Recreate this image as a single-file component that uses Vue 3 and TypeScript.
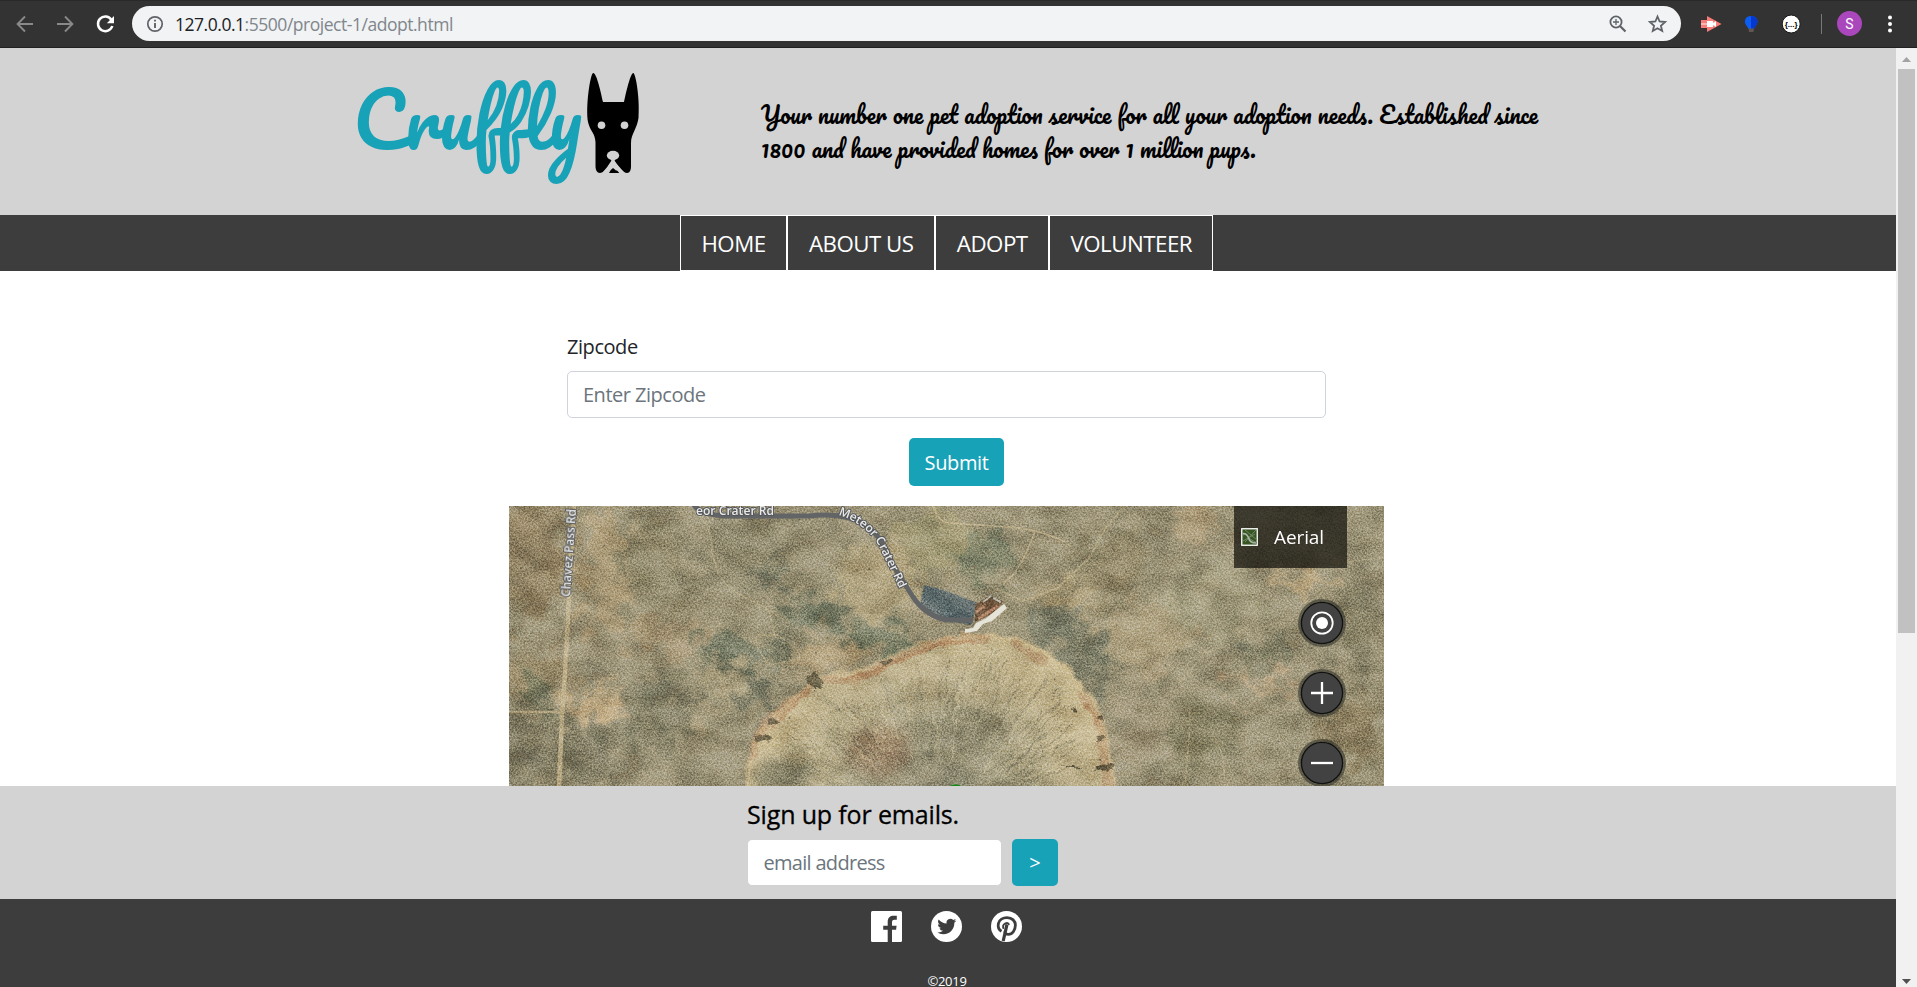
<script setup lang="ts">
interface NavItem {
  label: string
  width: number
}

const navItems: NavItem[] = [
  { label: 'HOME', width: 107.5 },
  { label: 'ABOUT US', width: 148 },
  { label: 'ADOPT', width: 114 },
  { label: 'VOLUNTEER', width: 164 },
]

const rim: [number, number][] = [
  [236, 284], [240, 255], [250, 225], [268, 205], [300, 180], [315, 168], [345, 168],
  [375, 155], [410, 138], [440, 131], [470, 129], [505, 131], [530, 141], [550, 155],
  [565, 168], [576, 186], [592, 206], [598, 235], [606, 284],
]

const smooth = (points: [number, number][]): string => {
  let d = `M${points[0][0]} ${points[0][1]}`
  for (let i = 1; i < points.length - 1; i++) {
    const mx = (points[i][0] + points[i + 1][0]) / 2
    const my = (points[i][1] + points[i + 1][1]) / 2
    d += ` Q${points[i][0]} ${points[i][1]} ${mx} ${my}`
  }
  const last = points[points.length - 1]
  return `${d} L${last[0]} ${last[1]}`
}

const rimPath = smooth(rim)

// Seeded generator keeps the terrain identical on every load.
let seed = 19
const rnd = (): number => {
  seed = (seed * 16807) % 2147483647
  return seed / 2147483647
}

const rimPoint = (t: number): [number, number] => {
  const f = t * (rim.length - 1)
  const i = Math.min(Math.floor(f), rim.length - 2)
  const k = f - i
  return [rim[i][0] + (rim[i + 1][0] - rim[i][0]) * k, rim[i][1] + (rim[i + 1][1] - rim[i][1]) * k]
}

interface Ridge {
  d: string
  light: boolean
  width: number
}

const ridges: Ridge[] = Array.from({ length: 340 }, (_, n) => {
  const [x, y] = rimPoint(0.01 + rnd() * 0.98)
  const a = 0.06 + rnd() * 0.4
  const b = a + 0.06 + rnd() * 0.18
  const cx = 425
  const cy = 330
  const px = x + (cx - x) * a
  const py = y + (cy - y) * a
  const qx = x + (cx - x) * b
  const qy = y + (cy - y) * b
  const j = (rnd() - 0.5) * 9
  return {
    d: `M${px.toFixed(1)} ${py.toFixed(1)} Q${((px + qx) / 2 + j).toFixed(1)} ${((py + qy) / 2 + j).toFixed(1)} ${qx.toFixed(1)} ${qy.toFixed(1)}`,
    light: n % 2 === 0,
    width: 0.5 + rnd() * 1.1,
  }
})

interface Patch {
  x: number
  y: number
  rx: number
  ry: number
  c: string
  o: number
}

const patches: Patch[] = [
  { x: 95, y: 60, rx: 22, ry: 70, c: '#b29d77', o: 0.65 },
  { x: 20, y: 45, rx: 40, ry: 60, c: '#8d7c58', o: 0.6 },
  { x: 20, y: 170, rx: 45, ry: 25, c: '#95835f', o: 0.6 },
  { x: 25, y: 245, rx: 45, ry: 40, c: '#77725a', o: 0.7 },
  { x: 30, y: 185, rx: 14, ry: 20, c: '#5f6751', o: 0.6 },
  { x: 85, y: 200, rx: 28, ry: 15, c: '#c0a982', o: 0.9 },
  { x: 80, y: 250, rx: 22, ry: 34, c: '#746f58', o: 0.7 },
  { x: 145, y: 60, rx: 28, ry: 50, c: '#857b5d', o: 0.5 },
  { x: 150, y: 205, rx: 40, ry: 40, c: '#7c7a63', o: 0.65 },
  { x: 155, y: 130, rx: 40, ry: 18, c: '#b09b78', o: 0.55 },
  { x: 240, y: 40, rx: 40, ry: 30, c: '#827d62', o: 0.6 },
  { x: 262, y: 70, rx: 20, ry: 14, c: '#6f7561', o: 0.5 },
  { x: 225, y: 145, rx: 34, ry: 17, c: '#656e5b', o: 0.65 },
  { x: 308, y: 105, rx: 30, ry: 16, c: '#616b58', o: 0.65 },
  { x: 275, y: 142, rx: 12, ry: 9, c: '#59634f', o: 0.7 },
  { x: 220, y: 175, rx: 28, ry: 8, c: '#b7aa87', o: 0.6 },
  { x: 200, y: 205, rx: 38, ry: 8, c: '#b3a480', o: 0.6 },
  { x: 250, y: 190, rx: 20, ry: 20, c: '#69705d', o: 0.55 },
  { x: 370, y: 75, rx: 40, ry: 40, c: '#b9aa82', o: 0.7 },
  { x: 425, y: 35, rx: 40, ry: 30, c: '#a19870', o: 0.7 },
  { x: 320, y: 150, rx: 45, ry: 14, c: '#baa47d', o: 0.75 },
  { x: 375, y: 133, rx: 42, ry: 14, c: '#6b735d', o: 0.7 },
  { x: 478, y: 52, rx: 30, ry: 24, c: '#7c8268', o: 0.6 },
  { x: 545, y: 120, rx: 30, ry: 18, c: '#717461', o: 0.7 },
  { x: 578, y: 155, rx: 24, ry: 28, c: '#6f7460', o: 0.7 },
  { x: 560, y: 90, rx: 30, ry: 16, c: '#b1a17a', o: 0.65 },
  { x: 640, y: 130, rx: 50, ry: 34, c: '#afa07d', o: 0.75 },
  { x: 700, y: 95, rx: 50, ry: 35, c: '#a6a080', o: 0.7 },
  { x: 600, y: 60, rx: 30, ry: 40, c: '#8f8362', o: 0.6 },
  { x: 690, y: 15, rx: 22, ry: 18, c: '#baa078', o: 0.5 },
  { x: 790, y: 74, rx: 34, ry: 9, c: '#bea77e', o: 0.8 },
  { x: 755, y: 150, rx: 30, ry: 20, c: '#79785e', o: 0.55 },
  { x: 690, y: 230, rx: 40, ry: 40, c: '#85805f', o: 0.5 },
  { x: 630, y: 215, rx: 35, ry: 45, c: '#a1967c', o: 0.6 },
  { x: 850, y: 120, rx: 25, ry: 40, c: '#7b7559', o: 0.65 },
  { x: 840, y: 225, rx: 30, ry: 35, c: '#897b59', o: 0.6 },
  { x: 745, y: 180, rx: 20, ry: 7, c: '#c2a783', o: 0.75 },
  { x: 777, y: 170, rx: 14, ry: 9, c: '#c2a783', o: 0.7 },
]

interface Speck {
  x: number
  y: number
  r: number
  dark: boolean
}

const specks: Speck[] = Array.from({ length: 750 }, (_, n) => ({
  x: rnd() * 875,
  y: rnd() * 280,
  r: 0.4 + rnd() * 0.8,
  dark: n % 4 !== 0,
}))
</script>

<template>
  <div class="window">
    <header class="toolbar">
      <svg class="nav-icons" width="132" height="48" viewBox="0 0 132 48" fill="none">
        <g stroke="#88898b" stroke-width="1.9">
          <path d="M33 24H18M25 16.5 17.6 24l7.4 7.500" />
          <path d="M57 24h15M65 16.500 72.400 24 65 31.500" />
        </g>
        <path d="M111.300 19.700A7.300 7.300 0 1 0 112.300 26" stroke="#fff" stroke-width="2.500" />
        <path d="M114 16v7.200h-7.200Z" fill="#fff" />
      </svg>
      <div class="address">
        <svg class="info" width="18" height="18" viewBox="0 0 18 18">
          <circle cx="9" cy="9" r="7.200" fill="none" stroke="#5f6368" stroke-width="1.700" />
          <path d="M9 8v5M9 4.700v1.900" stroke="#5f6368" stroke-width="1.900" />
        </svg>
        <span class="url"><b>127.0.0.1</b>:5500/project-1/adopt.html</span>
        <svg class="address-tools" width="62" height="22" viewBox="0 0 62 22" fill="none">
          <g stroke="#5f6368" stroke-width="1.800">
            <circle cx="8" cy="9" r="5.600" />
            <path d="m12 13 5.500 5.500" stroke-width="2.200" />
            <path d="M5 9h6M8 6v6" stroke-width="1.300" />
            <path d="m49.500 3.500 2.100 5 5.500.5-4.200 3.700 1.300 5.300-4.700-2.800-4.700 2.800 1.300-5.300-4.200-3.700 5.500-.5Z" />
          </g>
        </svg>
      </div>
      <svg class="extensions" width="236" height="48" viewBox="0 0 236 48">
        <path d="M20 20h6v-4l14.500 8-14.500 8v-4h-6Z" fill="#fa7c78" />
        <path d="M26 21h6v2l3-2v6l-3-2v2h-6Z" fill="#fff" />
        <path d="M20 23h6v2h-6Z" fill="#fbb6b2" />
        <path d="M70 16c8 0 7.200 8 4.500 10l-1.500 3h-5.500l-2-3.500c-3-3-2-9.500 4.500-9.500Z" fill="#0b5df4" />
        <path d="M70 16v13h3l1.500-3c3-2 3.500-10-4.500-10Z" fill="#0638cf" />
        <path d="M67.500 28.500h5.500L72.500 32H68Z" fill="#625650" />
        <circle cx="110.200" cy="24" r="9" fill="#fff" stroke="#171717" />
        <text x="110.200" y="27" text-anchor="middle" textLength="13" lengthAdjust="spacingAndGlyphs" class="braces">{...}</text>
        <path d="M140.500 14v20" stroke="#77787a" />
        <circle cx="168.500" cy="23.500" r="12.500" fill="#ab47bc" />
        <text x="168.500" y="28.500" text-anchor="middle" class="avatar">S</text>
        <g fill="#fff">
          <circle cx="209" cy="17.500" r="2" />
          <circle cx="209" cy="24" r="2" />
          <circle cx="209" cy="30.500" r="2" />
        </g>
      </svg>
    </header>

    <div class="viewport">
      <div class="page">
        <section class="banner">
          <svg class="logo" width="300" height="150" viewBox="350 50 300 150">
            <text class="wordmark" x="353" y="149.500">Cruffly</text>
            <path
              d="M593 73C590 75 585.500 107 588 122C590 131 595 133 595.500 142V166C595.500 170 597 173 600 173C605 173 610 164 613 161L620 173L613.600 173C616 170 618 169 621 173L613 161C619 165 623 173 627 173C630 173 631 170 631 166V143C631 134 637 129 638.500 118C640 99 636 75 633.500 73C631 72 627 88 624 102H603C600 88 596 72 593 73Z"
              fill="#000"
            />
            <g fill="#d3d3d3">
              <circle cx="601.500" cy="125.300" r="3.800" />
              <circle cx="624.500" cy="125.300" r="3.800" />
              <ellipse cx="613" cy="155.500" rx="6.200" ry="4.700" />
            </g>
            <path d="M613 158v3.500c-3 5-5 8-9 12M613 161.500c3 5 5 8 9 12" fill="none" stroke="#d3d3d3" stroke-width="3.500" />
            <path d="M609 173q1-3 4-5q3 2 5 5Z" fill="#000" />
          </svg>
          <p class="tagline">Your number one pet adoption service for all your adoption needs. Established since<br />1800 and have provided homes for over 1 million pups.</p>
        </section>

        <nav class="menu">
          <a v-for="item in navItems" :key="item.label" class="menu-link" :style="{ width: item.width + 'px' }">{{ item.label }}</a>
        </nav>

        <main class="content">
          <form class="search">
            <label class="zip-label" for="zip">Zipcode</label>
            <input id="zip" class="field zip-field" type="text" placeholder="Enter Zipcode" />
            <button class="button submit" type="button">Submit</button>
          </form>

          <div class="map">
            <svg class="terrain" width="875" height="280" viewBox="0 0 875 280">
              <defs>
                <filter id="grain" x="0" y="0" width="100%" height="100%" color-interpolation-filters="sRGB">
                  <feTurbulence type="fractalNoise" baseFrequency="0.6" numOctaves="3" seed="7" />
                  <feColorMatrix values="2 0 0 0 -.5  2 0 0 0 -.5  2 0 0 0 -.5  0 0 0 0 1" />
                </filter>
                <filter id="clouds" x="0" y="0" width="100%" height="100%" color-interpolation-filters="sRGB">
                  <feTurbulence type="fractalNoise" baseFrequency="0.03 0.045" numOctaves="6" seed="12" />
                  <feColorMatrix values="2.4 0 0 0 -.68  2.2 .2 0 0 -.66  1.900 .3 0 0 -.56  0 0 0 0 1" />
                </filter>
                <filter id="soft" x="-50%" y="-50%" width="200%" height="200%"><feGaussianBlur stdDeviation="7" /></filter>
                <filter id="ground" x="-20%" y="-20%" width="140%" height="140%">
                  <feGaussianBlur in="SourceGraphic" stdDeviation="5" result="b" />
                  <feTurbulence type="fractalNoise" baseFrequency="0.05" numOctaves="5" seed="9" result="n" />
                  <feDisplacementMap in="b" in2="n" scale="60" xChannelSelector="R" yChannelSelector="G" />
                </filter>
                <filter id="rough" x="-10%" y="-10%" width="120%" height="120%">
                  <feTurbulence type="fractalNoise" baseFrequency="0.09" numOctaves="3" seed="4" result="n" />
                  <feDisplacementMap in="SourceGraphic" in2="n" scale="9" xChannelSelector="R" yChannelSelector="G" />
                </filter>
                <radialGradient id="bowl" gradientUnits="userSpaceOnUse" cx="425" cy="305" r="190">
                  <stop offset="0" stop-color="#8c8770" />
                  <stop offset=".35" stop-color="#9c957a" />
                  <stop offset=".68" stop-color="#b5a986" />
                  <stop offset="1" stop-color="#c9b990" />
                </radialGradient>
                <path id="meteor-east" d="M329 9Q356 17 370 40L396 94" />
              </defs>
              <rect width="875" height="280" fill="#9b9276" />
              <g filter="url(#ground)">
                <ellipse v-for="(p, i) in patches" :key="i" :cx="p.x" :cy="p.y" :rx="p.rx" :ry="p.ry" :fill="p.c" :opacity="p.o" />
              </g>
              <g filter="url(#rough)">
                <path :d="rimPath + 'Z'" fill="url(#bowl)" />
              </g>
              <g filter="url(#soft)" opacity=".6">
                <ellipse cx="275" cy="268" rx="32" ry="16" fill="#696957" />
                <ellipse cx="370" cy="245" rx="30" ry="24" fill="#98795d" />
                <ellipse cx="455" cy="225" rx="50" ry="22" fill="#858068" />
              </g>
              <g filter="url(#rough)">
                <g fill="none" opacity=".34">
                  <path v-for="(r, i) in ridges" :key="i" :d="r.d" :stroke="r.light ? '#ded1aa' : '#6b6650'" :stroke-width="r.width" />
                </g>
                <path :d="rimPath" fill="none" stroke="#cbb78c" stroke-width="5" opacity=".5" />
                <g fill="none" stroke="#a8744e" stroke-linecap="round">
                  <path d="M243 250q8-38 27-44l30-23M318 173q34 4 54-12l55-24q35-7 50-3M505 137l28 18M572 190l18 24 5 37 4 25" stroke-width="9" opacity=".28" />
                  <path d="M262 222l38-36M335 172q24 0 40-11l52-22q20-4 36-4M576 198l14 20" stroke-width="4" opacity=".36" />
                </g>
                <g fill="#4e4632" opacity=".75">
                  <path d="M297 171l8-5 7 6 3 5-9 5-7-4ZM257 214l8-2 6 4-6 4-8-2ZM246 231l8-4 9 5-7 3-9 1ZM372 156l8-2 3 4-7 2ZM564 202l5-2 2 5-5 1ZM588 211l5-3 2 7-5-1ZM586 230l8-1 3 4-8 1ZM585 261l10-4 10 3-4 5-13-1ZM555 259l16 2-2 2-12-1Z" />
                </g>
              </g>
              <g fill="none" stroke="#c0b08b" stroke-linecap="round">
                <path d="M65-2 60 90 57 150 53 210 50 282" stroke-width="4.500" opacity=".9" />
                <path d="M0 206h51" stroke-width="2.500" opacity=".8" />
                <path d="M186 6q18 15 17 40 6 32 27 42l30 16 6 26" stroke-width="1.400" opacity=".6" />
                <path d="M259 158q-18-24-9-29h18q28 17 22 24l-29 6" stroke-width="1.400" opacity=".6" />
                <path d="M424 0q5 17 17 17l70 5q38 7 50 18M525 28q-15 41-31 49" stroke-width="1.500" opacity=".9" />
                <path d="M616 0q-23 22-34 50l-33 32-35 13-27-12" stroke-width="2" opacity=".6" />
                <path d="M681 200q0 28-5 80M705 231q12 19 10 38M838 56l37-5M690 147q35-4 43-23" stroke-width="1.400" opacity=".5" />
              </g>
              <path d="M415 79 440 86 469 97 462 119 431 113 411 100Z" fill="#5f6b6b" />
              <path d="M420 83h16l25 16M420 102l36 9" stroke="#839092" fill="none" opacity=".45" />
              <path d="M466 99l14-9 15 5-12 13-17 8Z" fill="#695039" />
              <path d="M469 113l20-13M467 106l8-6" stroke="#a8795f" stroke-width="3" />
              <path d="M474 96l8-6M484 92l8 4" stroke="#bdbcb0" stroke-width="2" />
              <g>
                <circle v-for="(s, i) in specks" :key="i" :cx="s.x" :cy="s.y" :r="s.r" :fill="s.dark ? '#4b4f39' : '#d0c299'" opacity=".4" />
              </g>
              <rect class="cloud-layer" width="875" height="280" filter="url(#clouds)" />
              <rect class="grain-layer" width="875" height="280" filter="url(#grain)" />
              <path d="M456 127l12-2 6-7 9-3 15-13-3-4-19 15-9 4-3 5-8 1Z" fill="#e6e3d8" />
              <path d="M184-3Q188 8 215 10H300Q342 5 364 25Q377 39 385 61L404 91Q416 109 437 114H464" fill="none" stroke="#626466" stroke-width="5" />
              <g class="road-label">
                <text transform="translate(61 91) rotate(-86)" textLength="88" lengthAdjust="spacingAndGlyphs">Chavez Pass Rd</text>
                <text x="187" y="9" textLength="78" lengthAdjust="spacingAndGlyphs">eor Crater Rd</text>
                <text><textPath href="#meteor-east" textLength="100">Meteor Crater Rd</textPath></text>
              </g>
              <ellipse cx="446.500" cy="282" rx="7" ry="3.500" fill="#128a17" />
            </svg>

            <div class="map-type">
              <svg width="17" height="18" viewBox="0 0 17 18">
                <rect x=".75" y=".75" width="15.500" height="16.500" fill="#365522" stroke="#fff" stroke-width="1.300" />
                <path d="M1.500 7Q6 5 9 11l7 4M4 2l12 10M15 2 4 14M2 13 14 6" fill="none" stroke="#718667" />
                <path d="M1.500 5.500Q6 5 7.500 10T15 15" fill="none" stroke="#a9b5a3" stroke-width="1.600" />
              </svg>
              <span>Aerial</span>
            </div>
            <div class="map-controls">
              <svg width="48" height="48" viewBox="0 0 48 48">
                <circle class="halo" cx="24" cy="24" r="24" />
                <circle class="disc" cx="24" cy="24" r="20.600" />
                <circle cx="24" cy="24" r="10.700" fill="none" stroke="#fff" stroke-width="1.800" />
                <circle cx="24" cy="24" r="6" fill="#fff" />
              </svg>
              <svg width="48" height="48" viewBox="0 0 48 48">
                <circle class="halo" cx="24" cy="24" r="24" />
                <circle class="disc" cx="24" cy="24" r="20.600" />
                <path d="M13 24h22M24 13v22" stroke="#fff" stroke-width="2.300" />
              </svg>
              <svg width="48" height="48" viewBox="0 0 48 48">
                <circle class="halo" cx="24" cy="24" r="24" />
                <circle class="disc" cx="24" cy="24" r="20.600" />
                <path d="M13 24h22" stroke="#fff" stroke-width="2.300" />
              </svg>
            </div>
          </div>
        </main>

        <section class="newsletter">
          <div class="newsletter-box">
            <h2 class="newsletter-title">Sign up for emails.</h2>
            <div class="newsletter-row">
              <input class="field email-field" type="text" placeholder="email address" />
              <button class="button send" type="button">&gt;</button>
            </div>
          </div>
        </section>

        <footer class="footer">
          <div class="social">
            <svg width="31" height="31" viewBox="0 0 31 31">
              <rect width="31" height="31" rx="1.500" fill="#fff" />
              <path d="M16.700 31V18.700h-4.500v-4h4.500V11c0-4.300 2.400-6.200 6.100-6.200h3v4h-2.300c-2 0-2.500.9-2.500 2.500v3.400h4.600l-.5 4H21V31Z" fill="#3d3d3d" />
            </svg>
            <svg width="31" height="31" viewBox="0 0 31 31">
              <circle cx="15.500" cy="15.500" r="15.500" fill="#fff" />
              <g transform="translate(6.300 6) scale(.79)">
                <path d="M23.950 4.570a10 10 0 0 1-2.820.77 4.960 4.960 0 0 0 2.160-2.720c-.95.550-2 .95-3.130 1.180a4.920 4.920 0 0 0-8.380 4.480C7.690 8.090 4.070 6.130 1.640 3.160a4.820 4.820 0 0 0-.67 2.480c0 1.700.87 3.210 2.190 4.100a4.900 4.900 0 0 1-2.230-.62v.06a4.920 4.920 0 0 0 3.950 4.830 5 5 0 0 1-2.210.08 4.940 4.940 0 0 0 4.600 3.420A9.870 9.870 0 0 1 0 19.540a13.990 13.990 0 0 0 7.550 2.210c9.050 0 14-7.500 14-13.980 0-.21 0-.42-.02-.63.960-.690 1.800-1.560 2.460-2.550Z" fill="#3d3d3d" />
              </g>
            </svg>
            <svg width="31" height="31" viewBox="0 0 31 31">
              <circle cx="15.500" cy="15.500" r="15.500" fill="#fff" />
              <g fill="none" stroke="#3d3d3d">
                <path d="M10.500 20.300C7.500 18.500 6.800 15.500 7.400 12.500 8.200 8.700 12 6.700 16 6.700c5.200 0 8.400 3.300 8.400 7.400 0 5.300-3.200 9.300-7 9.300-2.200 0-3.500-1.400-3.600-2.900" stroke-width="2.800" />
                <path d="M16 13.300 12.200 30" stroke-width="3.200" />
                <path d="M12.600 17.800C10.300 13.500 17.300 9.600 18 13.800" stroke-width="1.800" />
              </g>
            </svg>
          </div>
          <small class="copyright">©2019</small>
        </footer>
      </div>

      <aside class="scrollbar">
        <svg width="21" height="21" viewBox="0 0 21 21"><path d="M6 14h9l-4.500-5Z" fill="#a3a3a3" /></svg>
        <div class="thumb"></div>
        <svg class="down" width="21" height="21" viewBox="0 0 21 21"><path d="M6 13h9l-4.500 5Z" fill="#505050" /></svg>
      </aside>
    </div>
  </div>
</template>

<style>
html,
body {
  margin: 0;
  overflow: hidden;
}
</style>

<style scoped>
.window {
  width: 1917px;
  height: 987px;
  display: flex;
  flex-direction: column;
  overflow: hidden;
  background: #fff;
  font-family: 'Open Sans', 'Noto Sans', sans-serif;
  box-sizing: border-box;
}
svg {
  display: block;
  flex: none;
}
.toolbar {
  height: 48px;
  flex: none;
  box-sizing: border-box;
  display: flex;
  background: #333;
  box-shadow: inset 0 1px #292929, inset 0 -1px #202020;
}
.address {
  width: 1549px;
  height: 35px;
  margin-top: 6px;
  border-radius: 18px;
  background: #f1f3f4;
  display: flex;
  align-items: center;
}
.info {
  margin-left: 14px;
}
.url {
  margin-left: 11px;
  font-size: 17.5px;
  line-height: 34px;
  letter-spacing: -0.47px;
  color: #80868b;
  white-space: nowrap;
}
.url b {
  font-weight: 400;
  color: #202124;
}
.address-tools {
  margin-left: auto;
  margin-right: 11px;
}
.braces {
  font: 700 8px 'Liberation Sans', sans-serif;
}
.avatar {
  font: 14px Roboto, sans-serif;
  fill: #fff;
}
.viewport {
  flex: 1;
  min-height: 0;
  display: flex;
}
.page {
  width: 1896px;
  display: flex;
  flex-direction: column;
}
.banner {
  height: 167px;
  flex: none;
  display: flex;
  background: #d3d3d3;
}
.logo {
  margin: 2px 0 0 350px;
}
.wordmark {
  font: 75px Pacifico, Lato, sans-serif;
  fill: #18a2b8;
}
.tagline {
  margin: 50px 0 0 111px;
  font: 22.5px/33.5px Pacifico, Lato, sans-serif;
  color: #000;
  white-space: nowrap;
}
.menu {
  height: 56px;
  flex: none;
  display: flex;
  justify-content: center;
  background: #3d3d3d;
  padding-right: 3px;
}
.menu-link {
  box-sizing: border-box;
  height: 56px;
  border: 1px solid #fff;
  color: #fff;
  font-size: 22.3px;
  line-height: 55px;
  letter-spacing: -0.5px;
  text-align: center;
  white-space: nowrap;
}
.content {
  height: 515px;
  flex: none;
  display: flex;
  flex-direction: column;
  align-items: center;
}
.search {
  width: 759px;
  height: 235px;
  margin-right: 3px;
  display: flex;
  flex-direction: column;
}
.zip-label {
  margin-top: 61px;
  height: 39px;
  line-height: 30px;
  font-size: 20px;
  letter-spacing: -0.45px;
  color: #212529;
}
.field {
  box-sizing: border-box;
  border: 1px solid #ced4da;
  border-radius: 5px;
  padding: 0 15px;
  background: #fff;
  font: 20px 'Open Sans', 'Noto Sans', sans-serif;
  letter-spacing: -0.5px;
}
.field::placeholder {
  color: #6c757d;
  opacity: 1;
}
.zip-field {
  height: 47px;
  flex: none;
}
.button {
  border: 0;
  border-radius: 5px;
  padding: 0;
  background: #18a2b8;
  color: #fff;
  font: 20px 'Open Sans', 'Noto Sans', sans-serif;
}
.submit {
  width: 95px;
  height: 48px;
  margin: 20px 0 0 342px;
  letter-spacing: -0.4px;
}
.map {
  position: relative;
  width: 875px;
  height: 280px;
  margin-right: 3px;
  overflow: hidden;
}
.cloud-layer {
  mix-blend-mode: soft-light;
  opacity: 0.3;
}
.grain-layer {
  mix-blend-mode: overlay;
  opacity: 0.28;
}
.road-label text {
  font: 600 12px 'Open Sans', sans-serif;
  fill: #e9e9e9;
  stroke: #55575a;
  stroke-width: 2px;
  stroke-linejoin: round;
  paint-order: stroke;
}
.map-type {
  position: absolute;
  top: 0;
  right: 37px;
  width: 113px;
  height: 62px;
  box-sizing: border-box;
  padding-left: 7px;
  display: flex;
  align-items: center;
  gap: 16px;
  background: rgba(20, 18, 13, 0.72);
  color: #fff;
  font-size: 19px;
  letter-spacing: -0.1px;
}
.map-controls {
  position: absolute;
  right: 38px;
  top: 93px;
  display: flex;
  flex-direction: column;
  gap: 22px;
}
.halo {
  fill: #34352b;
  opacity: 0.62;
}
.disc {
  fill: #424242;
  stroke: #111;
  stroke-width: 1.3px;
}
.newsletter {
  height: 113px;
  flex: none;
  display: flex;
  background: #d3d3d3;
}
.newsletter-box {
  margin-left: 747px;
}
.newsletter-title {
  margin: 11px 0 0;
  height: 42px;
  line-height: 35px;
  font-size: 25px;
  font-weight: 500;
  letter-spacing: -0.15px;
  -webkit-text-stroke: 0.3px #000;
  white-space: nowrap;
}
.newsletter-row {
  display: flex;
  gap: 10px;
}
.email-field {
  width: 255px;
  height: 47px;
  border-color: #d0d2d4;
  padding: 0 15.5px;
  letter-spacing: -0.7px;
}
.send {
  width: 46px;
  height: 47px;
}
.footer {
  height: 88px;
  flex: none;
  display: flex;
  flex-direction: column;
  align-items: center;
  background: #3d3d3d;
  overflow: hidden;
}
.social {
  display: flex;
  gap: 29px;
  margin: 12px 3px 0 0;
}
.copyright {
  margin: 30px 2px 0 0;
  font-size: 13px;
  line-height: 18px;
  letter-spacing: -0.3px;
  color: #fff;
}
.scrollbar {
  width: 21px;
  background: #f1f1f1;
  display: flex;
  flex-direction: column;
  align-items: center;
}
.thumb {
  width: 17px;
  height: 564px;
  background: #c1c1c1;
}
.down {
  margin-top: auto;
}
</style>
